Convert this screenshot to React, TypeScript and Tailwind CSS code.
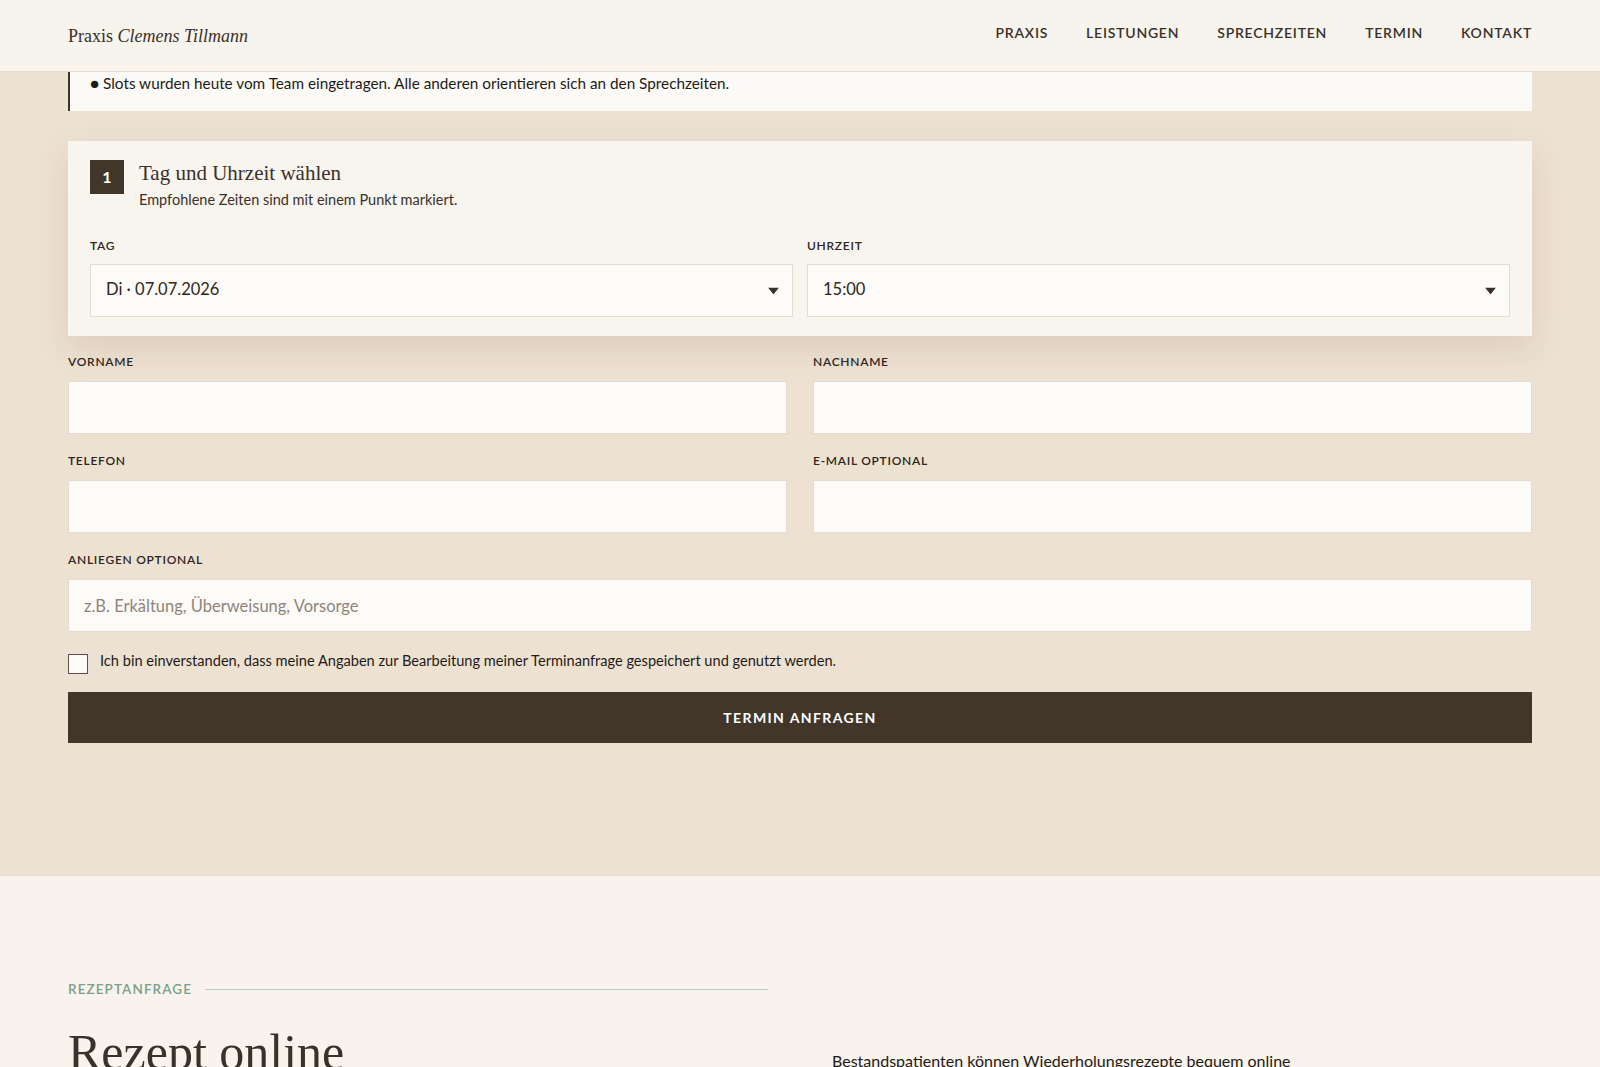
import React from "react";

function Arrow() {
  return (
    <svg
      className="pointer-events-none absolute right-[14px] top-1/2 -translate-y-1/2"
      width="11"
      height="7"
      viewBox="0 0 11 7"
    >
      <path d="M0 0 H11 L5.5 7 Z" fill="#3a312a" />
    </svg>
  );
}

function Label({ children }: { children: React.ReactNode }) {
  return (
    <div className="mb-[11px] text-[12px] font-semibold uppercase leading-4 tracking-[0.06em] text-[#2e2620]">
      {children}
    </div>
  );
}

function Field({ label, placeholder, wide }: { label: string; placeholder?: string; wide?: boolean }) {
  return (
    <div className={wide ? "col-span-2" : ""}>
      <Label>{label}</Label>
      <input
        placeholder={placeholder}
        className="block h-[53px] w-full border border-[#e4dacf] bg-[#fdfbf7] px-[15px] text-[16.5px] text-[#2e2620] outline-none placeholder:text-[#8d847c]"
      />
    </div>
  );
}

export default function App() {
  return (
    <div className="min-h-screen bg-[#f8f3ec] font-['Lato',sans-serif] text-[#2e2620]">
      <header className="flex h-[72px] items-center justify-between border-b border-[#e7dbcf] bg-[#f7f3ed] px-[68px]">
        <div className="mt-[1px] font-['Liberation_Serif',serif] text-[18px] text-[#3a312a]">
          Praxis <span className="italic">Clemens Tillmann</span>
        </div>
        <nav className="mb-[7px] flex gap-[38px] text-[14px] font-semibold uppercase tracking-[0.055em] text-[#3a312a]">
          <a>Praxis</a>
          <a>Leistungen</a>
          <a>Sprechzeiten</a>
          <a>Termin</a>
          <a>Kontakt</a>
        </nav>
      </header>

      <section className="border-b border-[#e6dacd] bg-[#ede1d2] px-[68px] pb-[132px]">
        <div className="border-l-2 border-[#3e342b] bg-[#fcfaf6] pb-[17px] pl-[20px] text-[15.3px] leading-[22px] text-[#1f1a16]">
          ● Slots wurden heute vom Team eingetragen. Alle anderen orientieren sich an den Sprechzeiten.
        </div>

        <div className="mt-[30px] bg-[#f8f4ee] px-[22px] pb-[19px] pt-[19px] shadow-[0_12px_32px_rgba(120,88,55,0.14)]">
          <div className="flex gap-[15px]">
            <div className="flex h-[34px] w-[34px] items-center justify-center bg-[#42362b] text-[16px] font-bold text-white">
              1
            </div>
            <div>
              <div className="font-['Liberation_Serif',serif] text-[21px] leading-[26px] text-[#3a312a]">
                Tag und Uhrzeit wählen
              </div>
              <div className="mt-[4px] text-[14.5px] leading-[20px] text-[#3a312a]">
                Empfohlene Zeiten sind mit einem Punkt markiert.
              </div>
            </div>
          </div>

          <div className="mt-[28px] grid grid-cols-2 gap-[14px]">
            <div>
              <div className="mb-[10px] text-[12px] font-semibold uppercase leading-4 tracking-[0.06em]">Tag</div>
              <div className="relative">
                <select className="block h-[53px] w-full appearance-none border border-[#e4dacf] bg-[#fdfbf7] px-[15px] pb-[3px] text-[16.5px] text-[#2e2620] outline-none">
                  <option>Di · 07.07.2026</option>
                </select>
                <Arrow />
              </div>
            </div>
            <div>
              <div className="mb-[10px] text-[12px] font-semibold uppercase leading-4 tracking-[0.06em]">Uhrzeit</div>
              <div className="relative">
                <select className="block h-[53px] w-full appearance-none border border-[#e4dacf] bg-[#fdfbf7] px-[15px] pb-[3px] text-[16.5px] text-[#2e2620] outline-none">
                  <option>15:00</option>
                </select>
                <Arrow />
              </div>
            </div>
          </div>
        </div>

        <div className="mt-[18px] grid grid-cols-2 gap-x-[26px] gap-y-[19px]">
          <Field label="Vorname" />
          <Field label="Nachname" />
          <Field label="Telefon" />
          <Field label="E-Mail optional" />
          <Field label="Anliegen optional" placeholder="z.B. Erkältung, Überweisung, Vorsorge" wide />
        </div>

        <label className="mt-[18px] flex items-start gap-[12px]">
          <span className="mt-[4px] block h-[20px] w-[20px] shrink-0 border-[1.5px] border-[#5b5148] bg-[#fdfbf7]" />
          <span className="text-[14.6px] leading-[22px] text-[#1f1a16]">
            Ich bin einverstanden, dass meine Angaben zur Bearbeitung meiner Terminanfrage gespeichert und genutzt werden.
          </span>
        </label>

        <button className="mt-[18px] flex h-[51px] w-full items-center justify-center bg-[#42362b] text-[14px] font-bold uppercase tracking-[0.1em] text-white">
          Termin anfragen
        </button>
      </section>

      <section className="grid grid-cols-2 gap-16 px-[68px] pb-[80px] pt-[105px]">
        <div>
          <div className="flex items-center gap-[13px]">
            <span className="text-[13.5px] font-semibold uppercase leading-4 tracking-[0.08em] text-[#7c9f8b]">
              Rezeptanfrage
            </span>
            <span className="h-px flex-1 bg-[#b9cec1]" />
          </div>
          <h2 className="mt-[28px] font-['Liberation_Serif',serif] text-[50px] font-normal leading-[1.1] text-[#3a312a]">
            Rezept online
          </h2>
        </div>
        <div className="pt-[67px]">
          <p className="max-w-[500px] text-[16px] leading-[1.6] text-[#1f1a16]">
            Bestandspatienten können Wiederholungsrezepte bequem online anfragen. Die Abholung erfolgt in der Praxis.
          </p>
        </div>
      </section>
    </div>
  );
}
